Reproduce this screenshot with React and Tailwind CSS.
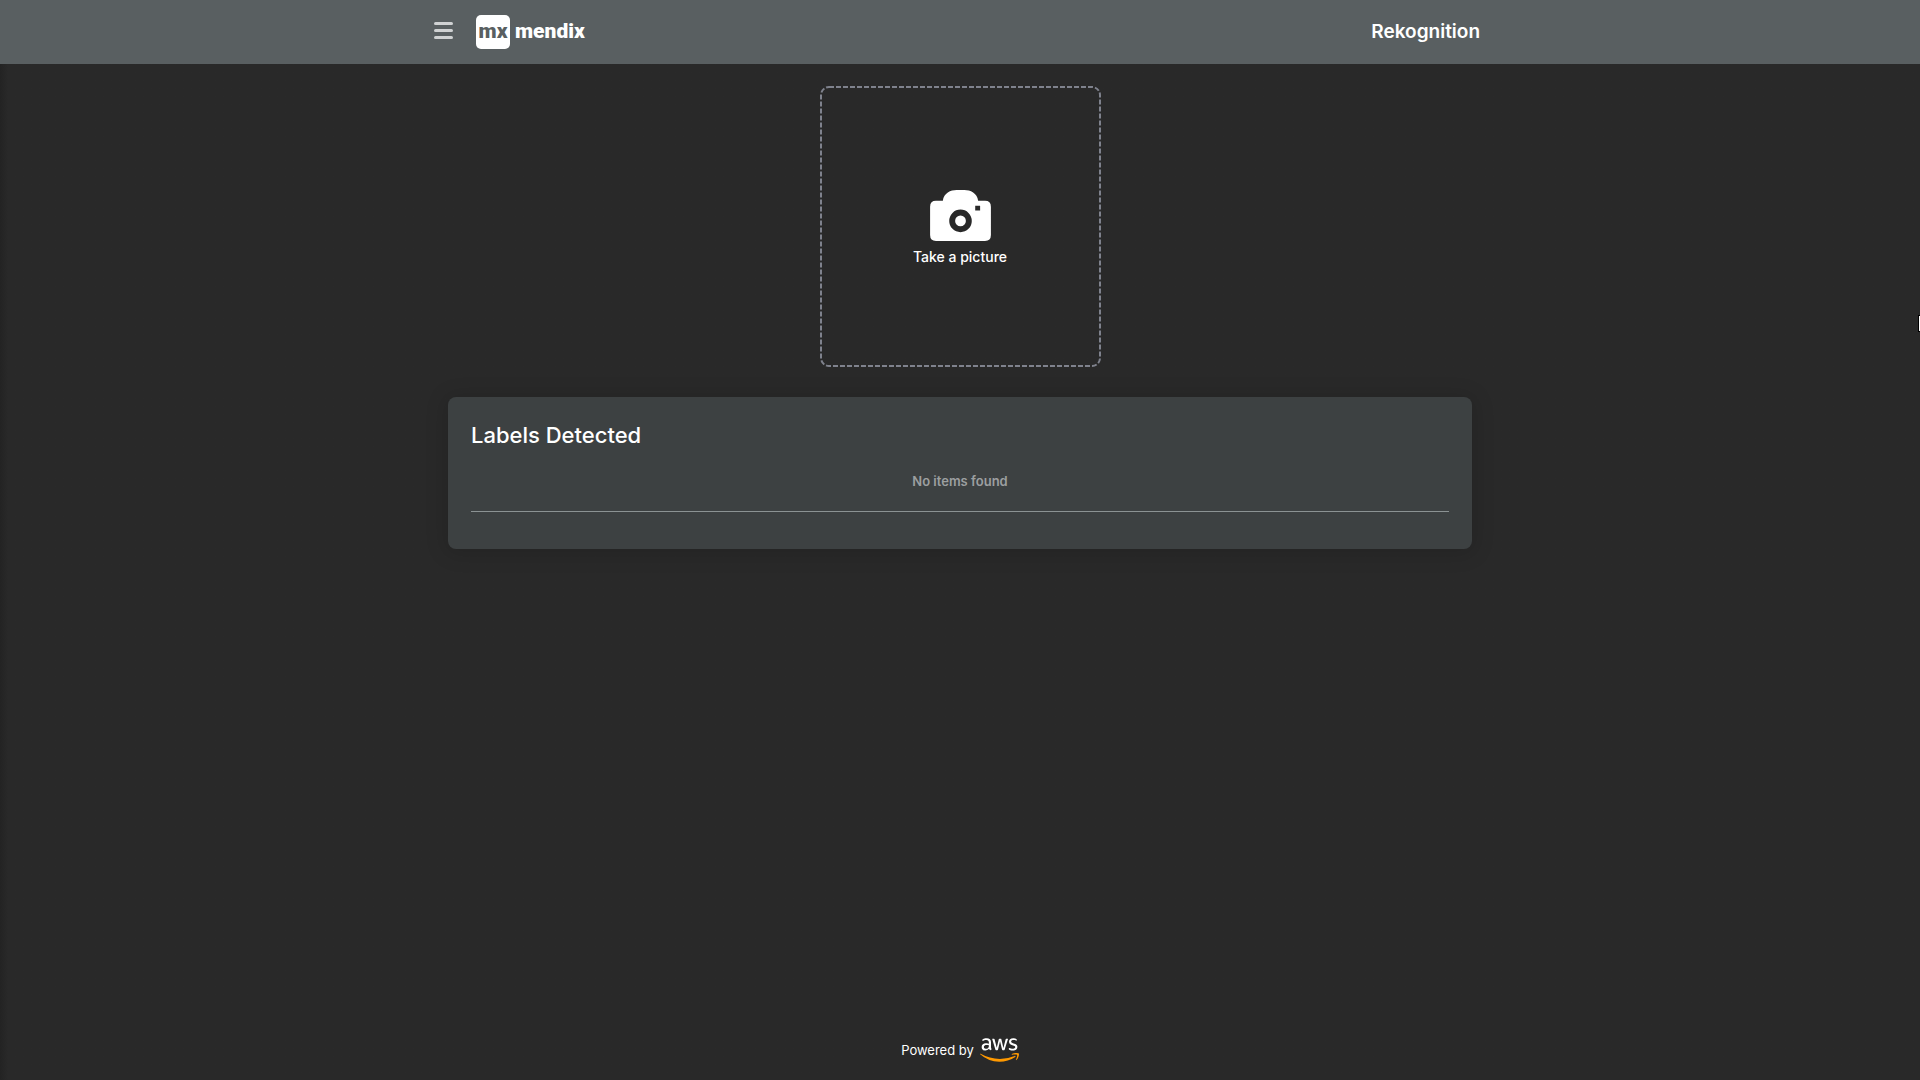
import { FaAws } from "react-icons/fa";

function Header() {
  return (
    <header className="h-16 bg-[#595f61]">
      <div className="mx-auto flex h-full max-w-[1056px] items-center pl-0.5 pr-2">
        <button type="button" aria-label="Open menu" className="flex w-[19px] flex-col gap-1 pb-1">
          <span className="h-[3px] rounded-sm bg-[#d0d2d3]" />
          <span className="h-[3px] rounded-sm bg-[#d0d2d3]" />
          <span className="h-[3px] rounded-sm bg-[#d0d2d3]" />
        </button>
        <a href="#home" className="ml-[23px] flex items-center gap-[5px] font-['Roboto',sans-serif] font-black">
          <span className="flex h-[34px] w-[34px] items-center justify-center rounded-[5px] bg-white pb-0.5 text-[21px] leading-[30px] text-[#595f61]">mx</span>
          <span className="pb-0.5 text-[21px] leading-[30px] text-white">mendix</span>
        </a>
        <h1 className="ml-auto text-[19px] font-semibold leading-6 text-white">Rekognition</h1>
      </div>
    </header>
  );
}

function CameraIcon() {
  return (
    <svg viewBox="0 0 62 52" className="h-[51px] w-[61px]" aria-hidden="true">
      <path
        fill="#fff"
        fillRule="evenodd"
        d="M6 11H13C14 3 21 0 27 0H35C41 0 48 3 49 11H56Q62 11 62 17V46Q62 52 56 52H6Q0 52 0 46V17Q0 11 6 11ZM46 16V21H51V16ZM31 20A11.500 11.500 0 1 0 31 43A11.500 11.500 0 1 0 31 20ZM31 26A5.500 5.500 0 1 1 31 37A5.500 5.500 0 1 1 31 26Z"
      />
    </svg>
  );
}

export default function App() {
  return (
    <div className="relative flex min-h-screen flex-col overflow-hidden bg-linear-to-r from-[#232323] to-[#292929] to-[8px] font-['Inter',sans-serif] text-white">
      <Header />
      <main className="flex w-full flex-1 flex-col items-center pt-[22px]">
        <button type="button" className="relative flex h-[281px] w-[281px] flex-col items-center justify-center pt-1.5">
          <svg className="absolute inset-0 h-full w-full" aria-hidden="true">
            <rect x="1" y="1" rx="8" className="h-[279px] w-[279px] fill-none stroke-[#7f828d] stroke-2" strokeDasharray="5 2" />
          </svg>
          <CameraIcon />
          <span className="mt-1 text-[14px] font-medium leading-6">Take a picture</span>
        </button>
        <section className="mt-[30px] w-full max-w-[1024px] rounded-lg bg-[#3d4142] px-[23px] pb-[37px] pt-[22px] shadow-[0_2px_20px_4px_rgba(0,0,0,0.12)]">
          <h2 className="text-[22px] font-medium leading-8">Labels Detected</h2>
          <p className="mt-5 border-b border-[#8b9293] pb-5 text-center text-[13px] font-semibold leading-5 text-[#9c9fa0]">No items found</p>
        </section>
      </main>
      <footer className="flex items-center justify-center gap-1.5 pb-3.5">
        <span className="text-[13px] leading-5">Powered by</span>
        <svg className="absolute h-0 w-0" aria-hidden="true">
          <linearGradient id="aws-fill" x1="0" y1="0" x2="0" y2="1">
            <stop offset="0.61" stopColor="#fff" />
            <stop offset="0.61" stopColor="#f90" />
          </linearGradient>
        </svg>
        <FaAws className="h-8 w-[39px] fill-[url(#aws-fill)]" aria-label="aws" />
      </footer>
      <div className="absolute right-0 top-[315px] h-[17px] w-0.5 border-y border-l border-black bg-white" />
    </div>
  );
}
